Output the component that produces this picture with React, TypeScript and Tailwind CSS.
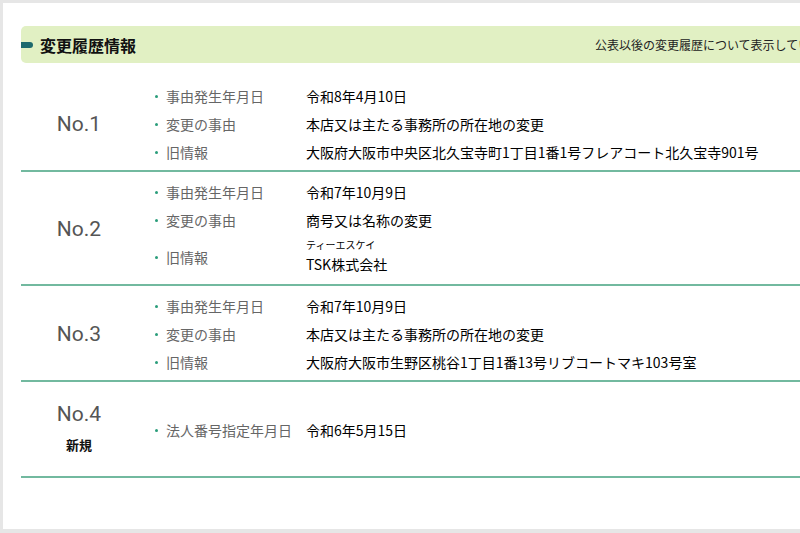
const font = { fontFamily: '"Noto Sans CJK JP", "Noto Sans", sans-serif' };

type Item = { label: string; value: string; ruby?: string };

const records: { no: string; badge?: string; items: Item[] }[] = [
  {
    no: "No.1",
    items: [
      { label: "事由発生年月日", value: "令和8年4月10日" },
      { label: "変更の事由", value: "本店又は主たる事務所の所在地の変更" },
      { label: "旧情報", value: "大阪府大阪市中央区北久宝寺町1丁目1番1号フレアコート北久宝寺901号" },
    ],
  },
  {
    no: "No.2",
    items: [
      { label: "事由発生年月日", value: "令和7年10月9日" },
      { label: "変更の事由", value: "商号又は名称の変更" },
      { label: "旧情報", value: "TSK株式会社", ruby: "ティーエスケイ" },
    ],
  },
  {
    no: "No.3",
    items: [
      { label: "事由発生年月日", value: "令和7年10月9日" },
      { label: "変更の事由", value: "本店又は主たる事務所の所在地の変更" },
      { label: "旧情報", value: "大阪府大阪市生野区桃谷1丁目1番13号リブコートマキ103号室" },
    ],
  },
  {
    no: "No.4",
    badge: "新規",
    items: [{ label: "法人番号指定年月日", value: "令和6年5月15日" }],
  },
];

function Row({ item }: { item: Item }) {
  return (
    <li className="flex items-center">
      <span className="flex w-[151px] items-center text-[14px] text-[#666]">
        <span className="mr-[8px] h-[3px] w-[3px] rounded-full bg-[#2a9d7a]" />
        {item.label}
      </span>
      {item.ruby ? (
        <div className="flex flex-col py-[4px]">
          <span className="text-[10px] leading-[14px] text-black">{item.ruby}</span>
          <span className="text-[14px] leading-[24px] text-black">{item.value}</span>
        </div>
      ) : (
        <span className="text-[14px] leading-[28px] text-black whitespace-nowrap">{item.value}</span>
      )}
    </li>
  );
}

export default function App() {
  return (
    <div className="h-[533px] w-[800px] overflow-hidden bg-[#e6e6e6] pt-[3px] pl-[3px]" style={font}>
      <div className="h-[526px] w-[900px] bg-white pt-[23px] pl-[18px]">
        <div className="flex h-[37px] w-[840px] items-center justify-between rounded-l-[5px] bg-[#e1f0c3] pr-[16px]">
          <div className="flex items-center">
            <span className="h-[6px] w-[12px] rounded-r-full bg-[#1d6a6d]" />
            <h2 className="ml-[7px] text-[16px] font-bold text-[#111]">変更履歴情報</h2>
          </div>
          <p className="text-[12px] text-[#222]">公表以後の変更履歴について表示しています。</p>
        </div>

        <div className="mt-[13px]">
          {records.map((r) => (
            <div key={r.no} className="flex items-center border-b-2 border-[#72b99f] pt-[6px] pb-[4px]">
              <div className={r.badge ? "flex w-[116px] flex-col items-center pb-[6px]" : "flex w-[116px] flex-col items-center"}>
                <span className="text-[21px] leading-[28px] text-[#555]" style={{ fontFamily: "Roboto, sans-serif" }}>
                  {r.no}
                </span>
                {r.badge && <span className="mt-[7px] text-[13px] font-bold text-[#111]">{r.badge}</span>}
              </div>
              <ul className={r.badge ? "ml-[18px] flex flex-col py-[28px]" : "ml-[18px] flex flex-col"}>
                {r.items.map((it) => (
                  <Row key={it.label} item={it} />
                ))}
              </ul>
            </div>
          ))}
        </div>
      </div>
    </div>
  );
}
